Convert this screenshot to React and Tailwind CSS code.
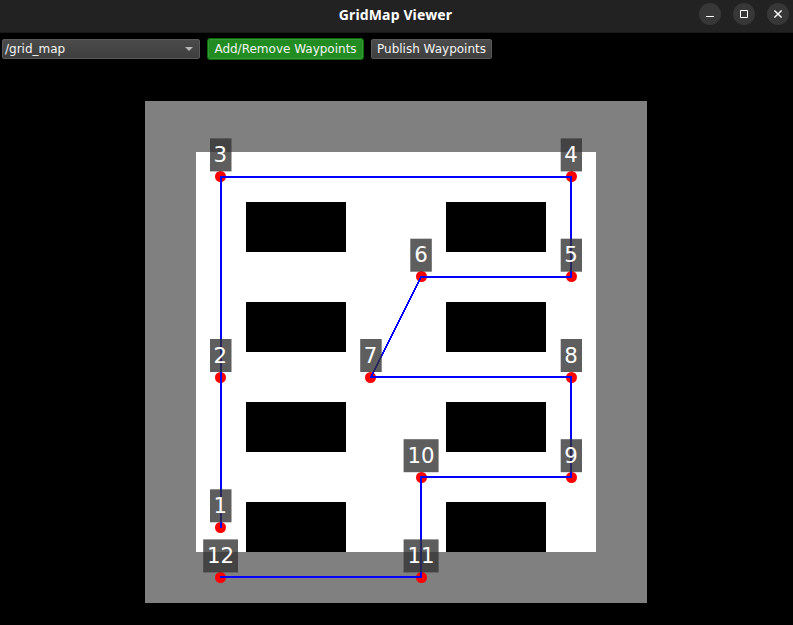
import React from "react";

// lx/ly: path vertex, x/y: marker centre, bx/by/bw: label box, tx/ty: label centre and baseline
const waypoints = [
  { n: 1, lx: 221, ly: 528, x: 220.5, y: 527.5, bx: 210, by: 489.3, bw: 21.5, tx: 220.4, ty: 513 },
  { n: 2, lx: 221, ly: 377, x: 220.5, y: 377.5, bx: 210, by: 339, bw: 21.5, tx: 220.4, ty: 363 },
  { n: 3, lx: 221, ly: 177, x: 220.5, y: 176.5, bx: 210, by: 138.4, bw: 21.5, tx: 220.4, ty: 162 },
  { n: 4, lx: 571, ly: 177, x: 571.5, y: 176.5, bx: 560.7, by: 138.4, bw: 21.3, tx: 571.1, ty: 162 },
  { n: 5, lx: 571, ly: 277, x: 571.5, y: 276.5, bx: 560.7, by: 238.7, bw: 21.3, tx: 571.1, ty: 262 },
  { n: 6, lx: 421, ly: 277, x: 421.5, y: 276.5, bx: 410.3, by: 238.7, bw: 21.5, tx: 421, ty: 262 },
  { n: 7, lx: 371, ly: 377, x: 370.5, y: 377.5, bx: 360.2, by: 339, bw: 21.5, tx: 370.6, ty: 363 },
  { n: 8, lx: 571, ly: 377, x: 571.5, y: 377.5, bx: 560.7, by: 339, bw: 21.3, tx: 571.1, ty: 363 },
  { n: 9, lx: 571, ly: 477, x: 571.5, y: 477.5, bx: 560.7, by: 439.2, bw: 21.3, tx: 571.1, ty: 463 },
  { n: 10, lx: 421, ly: 477, x: 421.5, y: 477.5, bx: 403.6, by: 439.2, bw: 35, tx: 421, ty: 463 },
  { n: 11, lx: 421, ly: 577, x: 421.5, y: 577.5, bx: 403.6, by: 539.4, bw: 35, tx: 421, ty: 563 },
  { n: 12, lx: 220, ly: 577, x: 220.5, y: 577.5, bx: 203.2, by: 539.4, bw: 34.8, tx: 220.6, ty: 563 },
];

const obstacles = [202, 302, 402, 502].flatMap((y) => [
  { x: 246, y },
  { x: 446, y },
]);

function WindowButton({ label, children }) {
  return (
    <button aria-label={label} className="flex size-[22px] items-center justify-center rounded-full bg-[#373737]">
      <svg width="22" height="22" viewBox="0 0 22 22" fill="none" stroke="#fff">
        {children}
      </svg>
    </button>
  );
}

function TitleBar() {
  return (
    <header className="grid h-[33px] grid-cols-[1fr_auto_1fr] border-b border-[#191919] bg-[#222222]">
      <div />
      <h1 className="pt-[5px] pr-[2px] font-['Noto_Sans',sans-serif] text-[14px] leading-5 font-bold tracking-[0.13px] whitespace-nowrap text-white">
        GridMap Viewer
      </h1>
      <div className="flex justify-end gap-3 pt-[3px] pr-1">
        <WindowButton label="Minimize">
          <path d="M7 13.5h8" />
        </WindowButton>
        <WindowButton label="Maximize">
          <path d="M7.5 7.5h7v7h-7z" />
        </WindowButton>
        <WindowButton label="Close">
          <path d="M7.4 7.4l7.2 7.2M14.6 7.4l-7.2 7.2" strokeWidth="1.4" />
        </WindowButton>
      </div>
    </header>
  );
}

function Toolbar() {
  return (
    <div className="flex h-8 items-center pl-[2px] text-[12px] leading-[18px] whitespace-nowrap text-[#f4f4f4]">
      <button className="flex h-5 w-[198px] items-center justify-between rounded-[2px] border border-[#595959] bg-linear-to-b from-[#4b4b4b] to-[#3e3e3e] pr-[6px] pl-[2px]">
        <span>/grid_map</span>
        <svg width="8" height="4" viewBox="0 0 8 4">
          <path d="M0 0h8L4 4z" fill="#b8b8b8" />
        </svg>
      </button>
      <button className="ml-[7px] flex h-[22px] w-[157px] items-center justify-center rounded-[3px] border border-[#0b6b0b] bg-[#228b22] shadow-[inset_0_0_0_1px_#339b33]">
        Add/Remove Waypoints
      </button>
      <button className="ml-[7px] flex h-5 w-[121px] items-center justify-center rounded-[2px] border border-[#595959] bg-linear-to-b from-[#4b4b4b] to-[#3e3e3e]">
        Publish Waypoints
      </button>
    </div>
  );
}

function GridMap() {
  return (
    <svg className="mt-9 ml-[145px] block" width="502" height="502" viewBox="145 101 502 502">
      <rect x="145" y="101" width="502" height="502" fill="#808080" />
      <rect x="196" y="152" width="400" height="400" fill="#fff" />
      {obstacles.map((o) => (
        <rect key={`${o.x}-${o.y}`} x={o.x} y={o.y} width="100" height="50" fill="#000" />
      ))}
      {waypoints.map((w) => (
        <circle key={w.n} cx={w.x} cy={w.y} r="5.5" fill="#f00" />
      ))}
      <polyline
        points={waypoints.map((w) => `${w.lx},${w.ly}`).join(" ")}
        fill="none"
        stroke="#00f"
        strokeWidth="2"
        shapeRendering="crispEdges"
      />
      {waypoints.map((w) => (
        <g key={w.n}>
          <rect x={w.bx} y={w.by} width={w.bw} height="33" fill="#323232" fillOpacity="0.784" />
          <text x={w.tx} y={w.ty} textAnchor="middle" fill="#fff" className="text-[21.3px]">
            {w.n}
          </text>
        </g>
      ))}
    </svg>
  );
}

export default function App() {
  return (
    <main className="h-[625px] w-[793px] overflow-hidden bg-black font-['DejaVu_Sans',sans-serif]">
      <TitleBar />
      <Toolbar />
      <GridMap />
    </main>
  );
}
